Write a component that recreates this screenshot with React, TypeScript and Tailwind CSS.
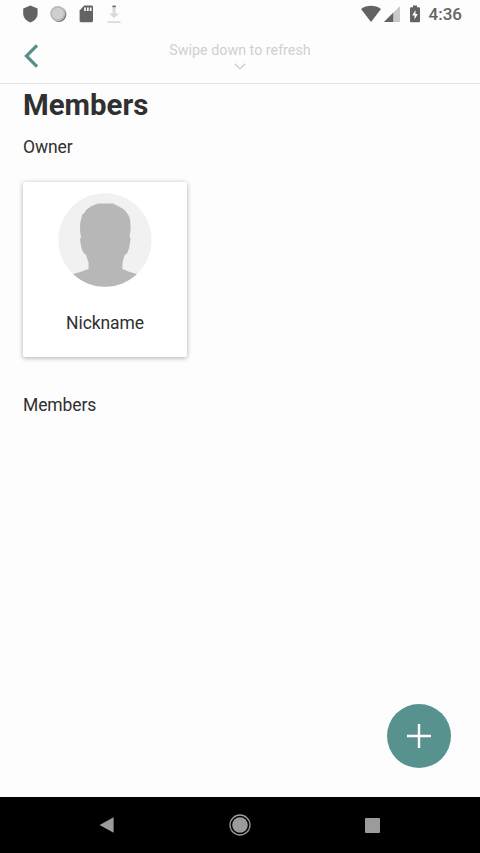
import type { ReactNode } from 'react';

function StatusBar() {
    return (
        <div className="flex h-7 items-center justify-between pr-[18px] pl-[23px] text-[#636363]">
            <div className="flex items-center gap-3">
                {/* Shield */}
                <svg className="h-[18px] w-[15px]" viewBox="0 0 15 18" fill="currentColor">
                    <path d="M7.4 .6 14.6 3.4V8.6C14.6 12.8 11.6 16.2 7.4 17.4 3.2 16.2 .2 12.8 .2 8.6V3.4Z" />
                </svg>
                {/* Sync circle */}
                <svg className="h-[18px] w-[17px]" viewBox="0 0 17 18">
                    <circle cx="9" cy="9.6" r="7.4" fill="#777" />
                    <circle cx="7.8" cy="8.6" r="7.6" fill="#bababa" />
                    <circle cx="7.8" cy="8.6" r="5.8" fill="#cfcfcf" />
                </svg>
                {/* SD card */}
                <svg className="h-[18px] w-[15px]" viewBox="0 0 15 18" fill="currentColor">
                    <path d="M5.2 .6H12.6Q14 .6 14 2V15.8Q14 17.2 12.6 17.2H2Q.6 17.2 .6 15.8V5.6Z" />
                    <path d="M5.2 2.5H6.9V6H5.2ZM8 2.5H9.7V6H8ZM10.8 2.5H12.5V6H10.8Z" fill="#fff" />
                </svg>
                {/* Download */}
                <svg className="ml-px h-[18px] w-[15px]" viewBox="0 0 15 18" fill="#d9d9d9">
                    <path d="M5.6 2H8.6V8.4H12L7.1 13.2 2.2 8.4H5.6Z" />
                    <path d="M.4 16.2H13.6V17.9H.4Z" />
                    <path d="M5.4 .6H8.8V2.2H5.4Z" fill="#666" />
                </svg>
            </div>
            <div className="flex items-center">
                <svg className="h-[18px] w-5" viewBox="0 0 20 18" fill="currentColor">
                    <path d="M0 4C6-.4 14-.4 20 4L10 17Z" />
                </svg>
                <svg className="ml-[3px] h-[18px] w-4" viewBox="0 0 16 18">
                    <path d="M16 1V17H0Z" fill="#c9c9c9" />
                    <path d="M9.2 7.8V17H0Z" fill="#636363" />
                </svg>
                <svg className="ml-[10px] h-[18px] w-[10px]" viewBox="0 0 10 18" fill="currentColor">
                    <path d="M3 .4H7V2.2H9Q10 2.2 10 3.2V16.2Q10 17.2 9 17.2H1Q0 17.2 0 16.2V3.2Q0 2.2 1 2.2H3Z" />
                    <path d="M5.5 5 2.2 10.4H4.5V14.6L7.8 8.9H5.5Z" fill="#fff" />
                </svg>
                <span className="ml-[9px] text-[17px] leading-5 font-medium">4:36</span>
            </div>
        </div>
    );
}

function Header() {
    return (
        <header className="grid h-14 grid-cols-[80px_1fr_80px] border-b border-[#e4e4e4]">
            <button type="button" aria-label="Back" className="flex items-center pl-[23px]">
                <svg className="h-6 w-4" viewBox="0 0 16 24" fill="none" stroke="#55918c" strokeWidth="3.2">
                    <path d="M14 1.4 3.4 12 14 22.6" />
                </svg>
            </button>
            <div className="flex flex-col items-center pt-3 text-[#d0d0d0]">
                <span className="text-[14.3px] leading-5">Swipe down to refresh</span>
                <svg className="mt-[3px] h-[7px] w-3" viewBox="0 0 12 7" fill="none" stroke="currentColor" strokeWidth="1.5">
                    <path d="M.8 .8 6 5.8 11.2 .8" />
                </svg>
            </div>
        </header>
    );
}

function Avatar() {
    return (
        <svg className="size-[94px]" viewBox="0 0 94 94">
            <defs>
                <clipPath id="avatar-clip">
                    <circle cx="47" cy="47" r="46.7" />
                </clipPath>
            </defs>
            <circle cx="47" cy="47" r="46.7" fill="#f1f1f1" />
            <path
                clipPath="url(#avatar-clip)"
                fill="#b7b7b7"
                d="M40 10.4 55 10.4 60 13Q70 17.5 72.2 27L72.6 36 71.6 44 72.6 46 71.2 55 69 60.5 66.6 62 64.4 70V76Q72 79.5 79 81L94 94H0L15 81Q23 79 30.6 76V70L28 62 25.6 60 23.4 55 22 46.5 23 44 22 38 22.2 30 24 22 27 19 28.5 16.5Q33 12.5 40 10.4Z"
            />
        </svg>
    );
}

function MemberCard({ name }: { name: string }) {
    return (
        <article className="flex h-[175px] w-[164px] flex-col items-center rounded-[2px] bg-white pt-[11px] shadow-[0_1px_5px_rgba(0,0,0,0.32)]">
            <Avatar />
            <span className="mt-6 text-[17.5px] leading-6 tracking-[-0.1px]">{name}</span>
        </article>
    );
}

function SectionTitle({ children }: { children: ReactNode }) {
    return <h2 className="text-[17.5px] leading-6 tracking-[-0.1px]">{children}</h2>;
}

function NavigationBar() {
    return (
        <nav className="flex h-14 items-center justify-between bg-black pr-[100px] pl-[99px]">
            <svg className="h-4 w-[15px]" viewBox="0 0 15 16" fill="#9b9b9b">
                <path d="M14.6 .2V15.8L.6 8Z" />
            </svg>
            <svg className="size-[22px]" viewBox="0 0 22 22">
                <circle cx="11" cy="11" r="10" fill="none" stroke="#9b9b9b" strokeWidth="1.3" />
                <circle cx="11" cy="11" r="7.8" fill="#9b9b9b" />
            </svg>
            <div className="size-[15px] rounded-[1px] bg-[#9b9b9b]" />
        </nav>
    );
}

export default function App() {
    return (
        <div className="relative flex h-screen flex-col bg-[#fdfdfd] font-[Roboto,sans-serif] text-[#303030]">
            <StatusBar />
            <Header />
            <main className="flex-1 px-[23px]">
                <h1 className="pt-[3px] text-[29.4px] leading-9 font-bold">Members</h1>
                <div className="mt-3">
                    <SectionTitle>Owner</SectionTitle>
                </div>
                <div className="mt-[23px] mb-9">
                    <MemberCard name="Nickname" />
                </div>
                <SectionTitle>Members</SectionTitle>
            </main>

            {/* Floating add button */}
            <button
                type="button"
                aria-label="Add member"
                className="absolute right-[29px] bottom-[85px] flex size-16 items-center justify-center rounded-full bg-[#58928e]"
            >
                <svg className="size-6" viewBox="0 0 24 24" stroke="#fff" strokeWidth="2.4">
                    <path d="M12 0V24M0 12H24" />
                </svg>
            </button>
            <NavigationBar />
        </div>
    );
}
